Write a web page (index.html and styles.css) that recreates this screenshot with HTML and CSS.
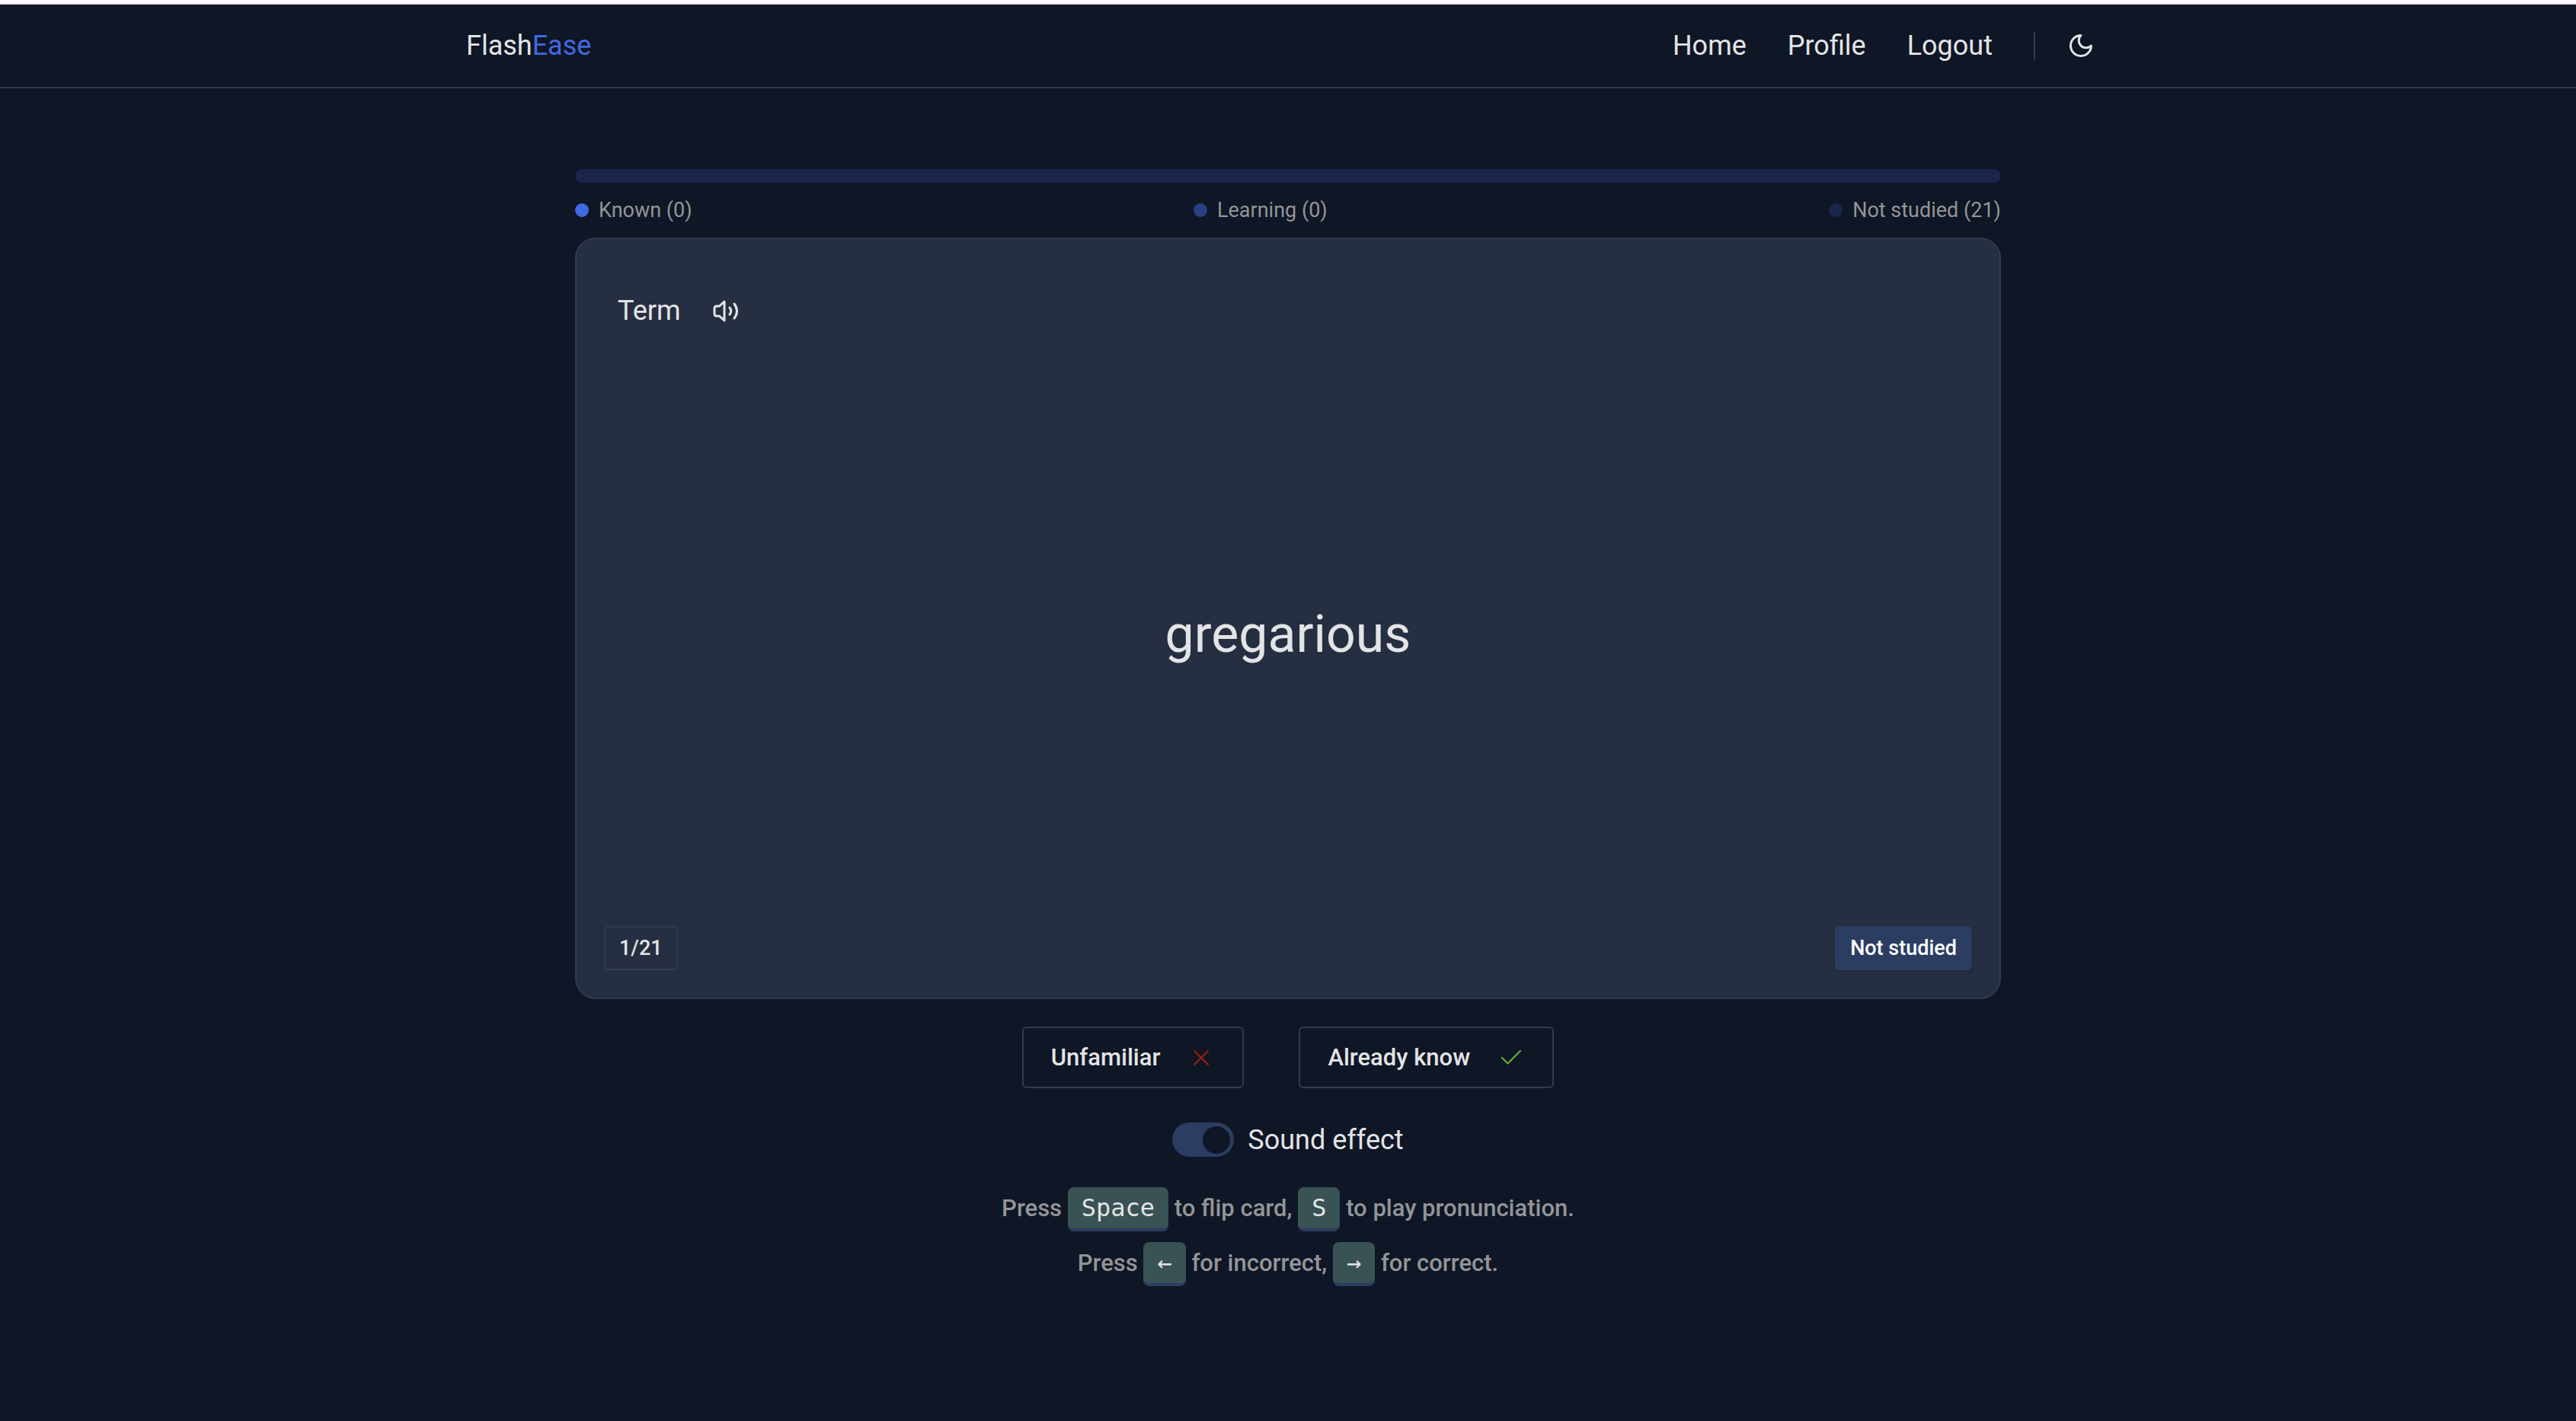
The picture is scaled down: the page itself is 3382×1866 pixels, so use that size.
FILE: index.html
```html
<!DOCTYPE html>
<html lang="en">
<head>
<meta charset="utf-8">
<meta name="viewport" content="width=device-width, initial-scale=1">
<title>FlashEase</title>
<link rel="stylesheet" href="styles.css">
</head>
<body>
<header class="header">
  <div class="header-inner">
    <a class="logo" href="#">Flash<span class="logo-accent">Ease</span></a>
    <nav class="nav">
      <a href="#">Home</a>
      <a href="#">Profile</a>
      <a href="#">Logout</a>
      <div class="theme">
        <button class="icon-button" type="button" aria-label="Toggle theme">
          <svg class="icon" viewBox="0 0 24 24"><path d="M12 3a6 6 0 0 0 9 9 9 9 0 1 1-9-9Z"/></svg>
        </button>
      </div>
    </nav>
  </div>
</header>
<main class="study">
  <section class="progress">
    <div class="progress-bar"></div>
    <ul class="legend">
      <li><span class="dot dot-known"></span>Known (0)</li>
      <li><span class="dot dot-learning"></span>Learning (0)</li>
      <li><span class="dot dot-new"></span>Not studied (21)</li>
    </ul>
  </section>
  <article class="card">
    <div class="card-head">
      <span>Term</span>
      <button class="icon-button" type="button" aria-label="Play pronunciation">
        <svg class="icon icon-speaker" viewBox="0 0 36 36"><path d="M17 6v25L10.500 25H7q-3 0-3-3v-7q0-3 3-3h3.500ZM24 14q3.500 4.500 0 9M30 9q7 9.500 0 19"/></svg>
      </button>
    </div>
    <p class="word">gregarious</p>
    <div class="card-foot">
      <span class="badge badge-outline">1/21</span>
      <span class="badge badge-solid">Not studied</span>
    </div>
  </article>
  <div class="answers">
    <button class="answer" type="button">Unfamiliar
      <svg class="icon icon-thin icon-wrong" viewBox="0 0 24 24"><path d="M18 6 6 18M6 6l12 12"/></svg>
    </button>
    <button class="answer" type="button">Already know
      <svg class="icon icon-thin icon-right" viewBox="0 0 24 24"><path d="M20 6 9 17l-5-5"/></svg>
    </button>
  </div>
  <div class="sound">
    <input class="switch" type="checkbox" role="switch" id="sound" checked>
    <label for="sound">Sound effect</label>
  </div>
  <div class="hints">
    <p>Press <kbd>Space</kbd> to flip card, <kbd>S</kbd> to play pronunciation.</p>
    <p>Press <kbd>←</kbd> for incorrect, <kbd>→</kbd> for correct.</p>
  </div>
</main>
</body>
</html>
```
FILE: styles.css
```css
:root {
  --bg: #0f1625;
  --card: #262e41;
  --border: #303b52;
  --text: #e3e4e6;
  --muted: #939598;
  --primary: #4169e1;
  --secondary: #2c3d62;
}

* {
  box-sizing: border-box;
  margin: 0;
}

body {
  min-height: 100vh;
  border-top: 4px solid #fff8fe;
  background: var(--bg);
  color: var(--text);
  font: 36px/54px Roboto, sans-serif;
}

a {
  color: inherit;
  text-decoration: none;
}

button {
  font: inherit;
  color: inherit;
  background: none;
  border: 0;
  cursor: pointer;
}

.icon {
  display: block;
  width: 36px;
  height: 36px;
  fill: none;
  stroke: currentColor;
  stroke-width: 2;
  stroke-linecap: round;
  stroke-linejoin: round;
}

.icon-button {
  padding: 18px 20px;
}

.header {
  border-top: 2px solid #e4e0e8;
  border-bottom: 2px solid var(--border);
}

.header-inner {
  display: flex;
  align-items: center;
  justify-content: space-between;
  max-width: 2158px;
  height: 108px;
  margin: 0 auto;
}

.logo-accent {
  color: var(--primary);
}

.nav {
  display: flex;
  align-items: center;
  gap: 54px;
}

.theme {
  display: flex;
  align-items: center;
  gap: 22px;
}

.theme::before {
  content: "";
  width: 2px;
  height: 36px;
  background: var(--border);
}

.study {
  max-width: 1872px;
  margin: 0 auto;
  padding: 106px 0 54px;
}

.progress-bar {
  height: 18px;
  border-radius: 9px;
  background: #1a264a;
}

.legend {
  display: flex;
  justify-content: space-between;
  padding: 16px 0;
  list-style: none;
  color: var(--muted);
  font-size: 27px;
  line-height: 40px;
}

.legend li {
  display: flex;
  align-items: center;
  gap: 13px;
}

.dot {
  width: 18px;
  height: 18px;
  border-radius: 50%;
}

.dot-known {
  background: var(--primary);
}

.dot-learning {
  background: #294083;
}

.dot-new {
  background: #1a264a;
}

.card {
  display: flex;
  flex-direction: column;
  justify-content: space-between;
  min-height: 1000px;
  padding: 36px;
  border: 2px solid var(--border);
  border-radius: 27px;
  background: var(--card);
}

.card-head {
  display: flex;
  align-items: center;
  gap: 20px;
  padding: 22px 18px;
}

.icon-speaker {
  stroke-width: 3;
}

.word {
  padding-top: 42px;
  font-size: 68px;
  line-height: 80px;
  text-align: center;
}

.card-foot {
  display: flex;
  justify-content: space-between;
  padding-top: 58px;
}

.badge {
  padding: 7px 18px;
  border: 2px solid var(--border);
  border-radius: 6px;
  font-size: 27px;
  font-weight: 500;
  line-height: 40px;
}

.badge-solid {
  border-color: var(--secondary);
  background: var(--secondary);
  color: #fff;
  box-shadow: 0 2px 4px rgb(0 0 0 / 15%);
}

.answers {
  display: flex;
  justify-content: center;
  gap: 72px;
  padding: 36px 0 45px;
}

.answer {
  display: flex;
  align-items: center;
  gap: 36px;
  height: 81px;
  padding: 0 36px;
  border: 2px solid var(--border);
  border-radius: 6px;
  font-size: 31px;
  font-weight: 500;
}

.icon-thin {
  stroke-width: 1.5;
}

.icon-wrong {
  color: #981d12;
}

.icon-right {
  color: #5bb138;
}

.sound {
  display: flex;
  align-items: center;
  justify-content: center;
  gap: 18px;
  height: 45px;
}

.switch {
  appearance: none;
  width: 81px;
  height: 45px;
  margin: 0;
  padding: 5px;
  border-radius: 23px;
  background: var(--secondary);
}

.switch::before {
  content: "";
  display: block;
  width: 36px;
  height: 36px;
  border-radius: 50%;
  background: var(--bg);
}

.switch:checked::before {
  margin-left: auto;
}

.hints {
  padding-top: 32px;
  color: var(--muted);
  font-size: 31px;
  font-weight: 500;
  line-height: 72px;
  text-align: center;
}

kbd {
  display: inline-block;
  padding: 0 18px;
  border-bottom: 4px solid var(--secondary);
  border-radius: 8px;
  background: #395253;
  color: var(--text);
  font: 32px/54px "DejaVu Sans Mono", monospace;
}
```
